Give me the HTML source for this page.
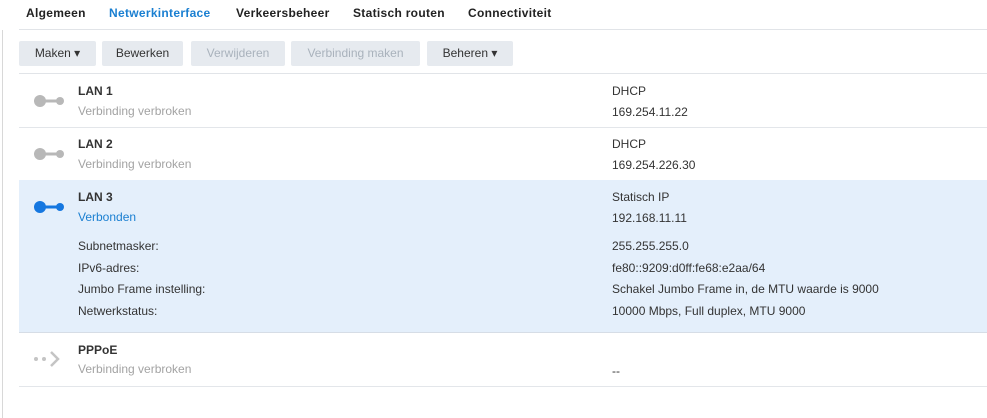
<!DOCTYPE html>
<html><head><style>
body{margin:0;width:987px;height:418px;background:#fff;font-family:"Liberation Sans",sans-serif;font-size:12px;color:#333;position:relative;overflow:hidden}
.a{position:absolute;white-space:nowrap}
.tab{top:6px;font-weight:bold;color:#222;letter-spacing:0.3px}
.btn{position:absolute;top:41px;height:25px;line-height:25px;background:#e6eaef;border-radius:2px;text-align:center;color:#333}
.dis{color:#a9b2bc}
.row{position:absolute;left:19px;width:968px;border-bottom:1px solid #e3e6ea}
.t{font-weight:bold;color:#333}
.g{color:#a3a3a3}
</style></head><body>
<div class="a" style="left:2px;top:30px;width:1px;height:388px;background:#d8d8d8"></div>
<div class="a tab" style="left:26px">Algemeen</div>
<div class="a tab" style="left:109px;color:#1a7fd1">Netwerkinterface</div>
<div class="a tab" style="left:236px">Verkeersbeheer</div>
<div class="a tab" style="left:353px">Statisch routen</div>
<div class="a tab" style="left:468px">Connectiviteit</div>
<div class="a" style="left:19px;top:29px;width:968px;height:1px;background:#e1e4e8"></div>
<div class="btn" style="left:19px;width:77px">Maken ▾</div>
<div class="btn" style="left:102px;width:81px">Bewerken</div>
<div class="btn dis" style="left:191px;width:94px">Verwijderen</div>
<div class="btn dis" style="left:291px;width:129px">Verbinding maken</div>
<div class="btn" style="left:427px;width:86px">Beheren ▾</div>
<div class="a" style="left:19px;top:73px;width:968px;height:1px;background:#e1e4e8"></div>

<div class="row" style="top:74px;height:53px"></div>
<svg class="a" style="left:33px;top:95px" width="32" height="12"><circle cx="7" cy="6" r="6" fill="#b8b8b8"/><rect x="7" y="4.5" width="20" height="3" fill="#b8b8b8"/><circle cx="27" cy="6" r="4" fill="#b8b8b8"/></svg>
<div class="a t" style="left:78px;top:84px">LAN 1</div>
<div class="a g" style="left:78px;top:104px">Verbinding verbroken</div>
<div class="a" style="left:612px;top:84px">DHCP</div>
<div class="a" style="left:612px;top:105px">169.254.11.22</div>

<div class="row" style="top:127px;height:53px"></div>
<svg class="a" style="left:33px;top:148px" width="32" height="12"><circle cx="7" cy="6" r="6" fill="#b8b8b8"/><rect x="7" y="4.5" width="20" height="3" fill="#b8b8b8"/><circle cx="27" cy="6" r="4" fill="#b8b8b8"/></svg>
<div class="a t" style="left:78px;top:137px">LAN 2</div>
<div class="a g" style="left:78px;top:157px">Verbinding verbroken</div>
<div class="a" style="left:612px;top:137px">DHCP</div>
<div class="a" style="left:612px;top:158px">169.254.226.30</div>

<div class="row" style="top:180px;height:152px;background:#e4effb;border-bottom-color:#d6dde6"></div>
<svg class="a" style="left:33px;top:201px" width="32" height="12"><circle cx="7" cy="6" r="6" fill="#1577e0"/><rect x="7" y="4.5" width="20" height="3" fill="#1577e0"/><circle cx="27" cy="6" r="4" fill="#1577e0"/></svg>
<div class="a t" style="left:78px;top:190px">LAN 3</div>
<div class="a" style="left:78px;top:210px;color:#1a7fd1">Verbonden</div>
<div class="a" style="left:612px;top:190px">Statisch IP</div>
<div class="a" style="left:612px;top:211px">192.168.11.11</div>
<div class="a" style="left:78px;top:239px">Subnetmasker:</div>
<div class="a" style="left:78px;top:261px">IPv6-adres:</div>
<div class="a" style="left:78px;top:282px">Jumbo Frame instelling:</div>
<div class="a" style="left:78px;top:304px">Netwerkstatus:</div>
<div class="a" style="left:612px;top:239px">255.255.255.0</div>
<div class="a" style="left:612px;top:261px">fe80::9209:d0ff:fe68:e2aa/64</div>
<div class="a" style="left:612px;top:282px">Schakel Jumbo Frame in, de MTU waarde is 9000</div>
<div class="a" style="left:612px;top:304px">10000 Mbps, Full duplex, MTU 9000</div>

<div class="row" style="top:333px;height:53px"></div>
<svg class="a" style="left:32px;top:349px" width="32" height="20"><circle cx="4" cy="10" r="2" fill="#c4c4c4"/><circle cx="12" cy="10" r="2" fill="#c4c4c4"/><path d="M19 3 L26 10 L19 17" stroke="#c4c4c4" stroke-width="2.5" fill="none"/></svg>
<div class="a t" style="left:78px;top:343px">PPPoE</div>
<div class="a g" style="left:78px;top:362px">Verbinding verbroken</div>
<div class="a" style="left:612px;top:364px">--</div>
</body></html>
